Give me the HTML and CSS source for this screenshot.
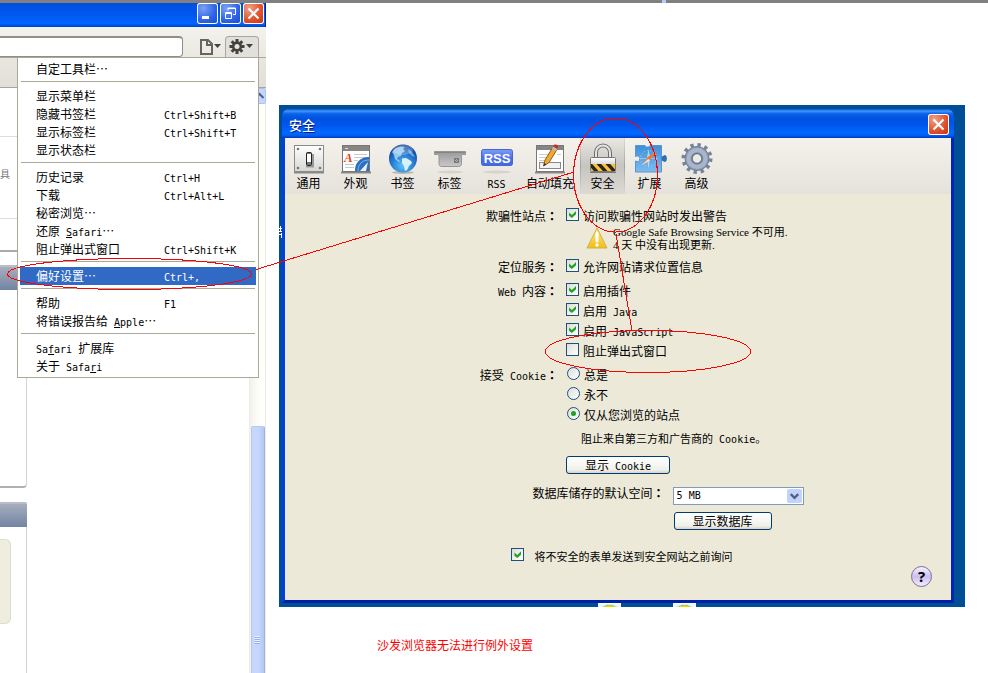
FILE: index.html
```html
<!DOCTYPE html>
<html lang="zh-CN">
<head>
<meta charset="utf-8">
<title>安全</title>
<link rel="stylesheet" href="styles.css">
</head>
<body>
<main class="stage">
  <section class="browser">
    <header class="browser-title">
      <button class="win-btn" aria-label="最小化"><svg width="21" height="21" viewBox="0 0 21 21"><rect x="5" y="13" width="7" height="3" fill="#fff"/></svg></button>
      <button class="win-btn" aria-label="还原"><svg width="21" height="21" viewBox="0 0 21 21" fill="none" stroke="#fff"><path d="M8 7.500V5h7.500v6.500H13M8 5.500h7.500"/><path d="M5.500 9.500h6v6h-6zM5 10.500h7"/></svg></button>
      <button class="win-btn win-close" aria-label="关闭"><svg width="21" height="21" viewBox="0 0 21 21"><path d="M5.500 5.500l10 10M15.500 5.500l-10 10" stroke="#fff" stroke-width="2.200"/></svg></button>
    </header>
    <div class="address-bar">
      <input class="address" type="text" aria-label="地址">
      <button class="tool-btn" aria-label="页面"><svg width="24" height="20" viewBox="0 0 24 20"><path d="M2 3h7l4 4v10H2zM8 3v5h5" fill="none" stroke="#66645e" stroke-width="2"/><path d="M15 7h7l-3.500 4z" fill="#44423c"/></svg></button>
      <button class="tool-btn tool-open" aria-label="设置"><svg width="28" height="20" viewBox="0 0 28 20"><g stroke="#45433a" stroke-width="3"><path d="M9 2v15M1.500 9.500h15M3.700 4.200l10.600 10.600M14.300 4.200L3.700 14.800"/></g><circle cx="9" cy="9.500" r="5" fill="#45433a"/><circle cx="9" cy="9.500" r="2.500" fill="#e7e5e0"/><path d="M18 7h7l-3.500 4z" fill="#44423c"/></svg></button>
    </div>
    <div class="bookmark-bar"></div>
    <div class="page">
      <div class="cards">
        <div class="card-line line-first"></div>
        <div class="card-text">具</div>
        <div class="card-line line-second"></div>
        <div class="card-end"></div>
        <div class="card-head"></div>
        <div class="card-body"></div>
        <div class="card-head head-next"></div>
        <div class="card-rest"><div class="paper"></div></div>
      </div>
      <div class="scrollbar">
        <div class="scroll-up"><svg width="15" height="15" viewBox="0 0 15 15"><path d="M3.500 9l4-4 4 4" fill="none" stroke="#4d6185" stroke-width="2"/></svg></div>
        <div class="thumb"><div class="grip"></div></div>
      </div>
    </div>
    <nav class="menu">
      <button class="item"><span>自定工具栏…</span></button>
      <hr>
      <button class="item"><span>显示菜单栏</span></button>
      <button class="item"><span>隐藏书签栏</span><kbd>Ctrl+Shift+B</kbd></button>
      <button class="item"><span>显示标签栏</span><kbd>Ctrl+Shift+T</kbd></button>
      <button class="item"><span>显示状态栏</span></button>
      <hr>
      <button class="item"><span>历史记录</span><kbd>Ctrl+H</kbd></button>
      <button class="item"><span>下载</span><kbd>Ctrl+Alt+L</kbd></button>
      <button class="item"><span>秘密浏览…</span></button>
      <button class="item"><span>还原<i class="en"> <u>S</u>afari</i>…</span></button>
      <button class="item"><span>阻止弹出式窗口</span><kbd>Ctrl+Shift+K</kbd></button>
      <hr>
      <button class="item active"><span>偏好设置…</span><kbd>Ctrl+,</kbd></button>
      <hr>
      <button class="item"><span>帮助</span><kbd>F1</kbd></button>
      <button class="item"><span>将错误报告给<i class="en"> <u>A</u>pple</i>…</span></button>
      <hr>
      <button class="item"><span><i class="en">Sa<u>f</u>ari </i>扩展库</span></button>
      <button class="item"><span>关于<i class="en"> Safa<u>r</u>i</i></span></button>
    </nav>
  </section>

  <section class="side">
    <div class="desktop">
      <svg class="glyph-bit" width="3" height="12" viewBox="0 0 3 12" fill="none" stroke="#fff"><path d="M0 2.500h3M1.500 0v5M0 5.500h3M0 8.500h2M2.500 7v5"/></svg>
      <div class="dialog">
        <header class="dialog-title">
          <h1>安全</h1>
          <button class="win-btn win-close" aria-label="关闭"><svg width="21" height="21" viewBox="0 0 21 21"><path d="M5.500 5.500l10 10M15.500 5.500l-10 10" stroke="#fff" stroke-width="2.200"/></svg></button>
        </header>
        <nav class="tabs">
          <button class="tab">
            <svg width="32" height="32" viewBox="0 0 32 32"><defs><linearGradient id="plate" x2="0" y2="1"><stop stop-color="#fff"/><stop offset="1" stop-color="#d6d6d4"/></linearGradient></defs><path d="M1 29.500h30" stroke="#8b8985" stroke-width="2"/><rect x="1.500" y="2.500" width="29" height="26" fill="url(#plate)" stroke="#8a8a8a"/><g fill="#777"><circle cx="5" cy="6" r="1.300"/><circle cx="27" cy="6" r="1.300"/><circle cx="5" cy="25" r="1.300"/><circle cx="27" cy="25" r="1.300"/></g><path d="M13 23.500h7V11" fill="none" stroke="#999" stroke-width="2"/><rect x="13.500" y="9.500" width="5" height="13" rx="1" fill="#777" stroke="#222"/><rect x="14" y="11" width="4" height="8" fill="#fff"/></svg>
            <span>通用</span>
          </button>
          <button class="tab">
            <svg width="32" height="32" viewBox="0 0 32 32"><defs><clipPath id="sheet"><rect x="3" y="8" width="26" height="20"/></clipPath></defs><path d="M1 29.500h30" stroke="#8b8985" stroke-width="2"/><rect x="2.500" y="2.500" width="27" height="26" fill="#fff" stroke="#777"/><rect x="3" y="3" width="26" height="5" fill="#8a8580"/><path d="M5 5.500h3" stroke="#ddd"/><g stroke="#c8c8c8"><path d="M14 11.500h13M14 14.500h13M14 17.500h4M5 21.500h9M5 24.500h9"/></g><text x="4" y="19" font-family="Liberation Serif" font-weight="bold" font-style="italic" font-size="13" fill="#e0481a">A</text><g clip-path="url(#sheet)"><circle cx="28" cy="27" r="13" fill="#2c6fc2"/><circle cx="28" cy="27" r="10" fill="none" stroke="#7db2e8"/><path d="M20 28l8-9-2 9z" fill="#e4f1ff"/></g></svg>
            <span>外观</span>
          </button>
          <button class="tab">
            <svg width="32" height="32" viewBox="0 0 32 32"><defs><radialGradient id="globe" cx=".5" cy=".75" r=".7"><stop stop-color="#5cc4f8"/><stop offset=".6" stop-color="#2578d0"/><stop offset="1" stop-color="#12439a"/></radialGradient></defs><ellipse cx="16" cy="29.500" rx="11" ry="1.500" fill="#b8b5ad"/><circle cx="16" cy="15.500" r="14" fill="url(#globe)"/><path d="M5 9c2-3 5-5 9-5.500l4 .5-2 2 2 2-3 2-1 3-3 1-1 2 3 2-1 1-4-3-1-4z" fill="#a9d8f5" opacity=".85"/><path d="M15 15.500l4-.5 5 3 1 2-3 3-2 4-2 1-1-5-2-3z" fill="#d9f1ff"/><path d="M21 6l4 3 3 5-3-1-3-3z" fill="#8cc6ef" opacity=".7"/><ellipse cx="16" cy="7" rx="10" ry="5" fill="#fff" opacity=".25"/></svg>
            <span>书签</span>
          </button>
          <button class="tab">
            <svg width="34" height="32" viewBox="0 0 34 32"><defs><linearGradient id="tabg" x2="0" y2="1"><stop stop-color="#999"/><stop offset="1" stop-color="#c8c8c8"/></linearGradient></defs><path d="M1.500 8.500h31v3h-2.500c-1 0-1.500.5-1.500 2v7c0 2-1 3-3 3H9c-2 0-3-1-3-3v-7c0-1.500-.5-2-1.500-2h-3z" fill="url(#tabg)" stroke="#959595"/><path d="M2 9.500h30" stroke="#858585"/><path d="M21.500 15.500h4v4h-4zM21.500 15.500l4 4M25.500 15.500l-4 4" stroke="#777" fill="none"/><ellipse cx="17" cy="29" rx="13" ry="1.500" fill="#d6d3cd"/></svg>
            <span>标签</span>
          </button>
          <button class="tab">
            <svg width="34" height="32" viewBox="0 0 34 32"><defs><linearGradient id="rssg" x2="0" y2="1"><stop stop-color="#7d9cf8"/><stop offset=".5" stop-color="#4f73ea"/><stop offset="1" stop-color="#4468e2"/></linearGradient></defs><rect x="1.500" y="6.500" width="31" height="16" rx="2" fill="url(#rssg)" stroke="#4565cf"/><text x="17" y="19.500" text-anchor="middle" font-family="Liberation Sans" font-weight="bold" font-size="13" fill="#fff">RSS</text><ellipse cx="17" cy="29" rx="14" ry="1.500" fill="#d6d3cd"/></svg>
            <span><i class="en">RSS</i></span>
          </button>
          <button class="tab tab-wide">
            <svg width="32" height="32" viewBox="0 0 32 32"><path d="M1 29.500h30" stroke="#8b8985" stroke-width="2"/><rect x="2.500" y="2.500" width="27" height="26" fill="#fff" stroke="#777"/><rect x="3" y="3" width="26" height="4" fill="#858585"/><path d="M5 11.500h13M5 14.500h9M5 17.500h9M23 11.500h4" stroke="#ccc"/><rect x="5.500" y="19.500" width="21" height="6" fill="#f2f2f2" stroke="#888"/><path d="M9.500 23l1.500-6L19 4l4 2.500-8 13z" fill="#efaa34" stroke="#985b18"/><path d="M18 5.500l1.500-2.500 4 2.500-1.500 2.500z" fill="#b9c1c9"/><path d="M19 3.500l1-1.500c2-1.500 5 1 4 2.500l-1 1.500z" fill="#c8302a"/><path d="M9.500 23l.7-3 2.300 1.500z" fill="#333"/></svg>
            <span>自动填充</span>
          </button>
          <button class="tab selected">
            <svg width="32" height="32" viewBox="0 0 32 32"><defs><linearGradient id="lockg" x2="0" y2="1"><stop stop-color="#fff"/><stop offset="1" stop-color="#b0b0b0"/></linearGradient><clipPath id="stripe"><rect x="4" y="21" width="24" height="7"/></clipPath></defs><path d="M9 15V9.500a7 7 0 0 1 14 0V15" fill="none" stroke="#6e6e6e" stroke-width="4"/><path d="M9 15V9.500a7 7 0 0 1 14 0V15" fill="none" stroke="#e4e4e4" stroke-width="2"/><rect x="3.500" y="14.500" width="25" height="14" rx="1" fill="url(#lockg)" stroke="#777"/><rect x="4" y="21" width="24" height="7" fill="#f8c23c"/><path clip-path="url(#stripe)" d="M2 20l8 9M11 20l8 9M20 20l8 9" stroke="#2b2618" stroke-width="3.400"/><path d="M3 29.500h26" stroke="#777"/></svg>
            <span>安全</span>
          </button>
          <button class="tab">
            <svg width="34" height="32" viewBox="0 0 34 32"><defs><linearGradient id="puz" x2="0" y2="1"><stop stop-color="#3c8fda"/><stop offset="1" stop-color="#7dbcee"/></linearGradient></defs><path d="M2.500 2.500h9.500c.5 2 4.500 2 5 0h11.500v11c1.500.5 2-1 3.500-1 2 0 2 6 0 6-1.500 0-2-1.500-3.500-1v11.500H2.500V18c1.500.5 2 .5 3 .5 1.500-.5 1.500-5 0-5.500-1 0-1.500 0-3 .5z" fill="url(#puz)" stroke="#5b94cb"/><path d="M28.500 13.500c1.500.5 2-1 3.500-1 2 0 2 6 0 6-1.500 0-2-1.500-3.500-1z" fill="#2f6fae"/><circle cx="15.500" cy="15.500" r="8" fill="none" stroke="#a9d3f5" stroke-dasharray="1 2"/><path d="M15.500 6l1.500 8.500-1.500 11-1.500-11z" fill="#b5dbf7"/><path d="M6 15.500h19" stroke="#8fc4ef"/><path d="M8 22.500l6.500-8 2.500 3z" fill="#d3915f"/><path d="M25 7l-8.500 10.500-2.500-3z" fill="#ee7a32"/><path d="M8 22.500l9-5-1.500-1.500z" fill="#f6e9df"/></svg>
            <span>扩展</span>
          </button>
          <button class="tab">
            <svg width="32" height="32" viewBox="0 0 32 32"><circle cx="16" cy="15.500" r="13.500" fill="none" stroke="#74849d" stroke-width="4" stroke-dasharray="3.300 3.770"/><circle cx="16" cy="15.500" r="12" fill="#8e9db4" stroke="#6d7c95"/><circle cx="16" cy="15.500" r="8.500" fill="none" stroke="#a9b6c9" stroke-width="4"/><circle cx="16" cy="15.500" r="5" fill="#eceae5" stroke="#66758d" stroke-width="1.500"/></svg>
            <span>高级</span>
          </button>
        </nav>

        <form class="form">
          <div class="row row-site">
            <div class="caption">欺骗性站点<b lang="zh-TW">：</b></div>
            <div class="fields">
              <label class="option"><input type="checkbox" checked><span>访问欺骗性网站时发出警告</span></label>
              <div class="notice">
                <svg width="24" height="24" viewBox="0 0 24 24"><defs><linearGradient id="warn" x2="0" y2="1"><stop stop-color="#ffe979"/><stop offset="1" stop-color="#f2bd16"/></linearGradient></defs><path d="M12 2L22 22H2z" fill="url(#warn)" stroke="#d3b04b" stroke-linejoin="round"/><path d="M12 7v8" stroke="#fff" stroke-width="3" stroke-linecap="round"/><circle cx="12" cy="19" r="1.700" fill="#fff"/></svg>
                <p>Google Safe Browsing Service 不可用.<br>4 天 中没有出现更新.</p>
              </div>
            </div>
          </div>
          <div class="row">
            <div class="caption">定位服务<b lang="zh-TW">：</b></div>
            <div class="fields">
              <label class="option"><input type="checkbox" checked><span>允许网站请求位置信息</span></label>
            </div>
          </div>
          <div class="row">
            <div class="caption"><i class="en">Web </i>内容<b lang="zh-TW">：</b></div>
            <div class="fields">
              <label class="option"><input type="checkbox" checked><span>启用插件</span></label>
              <label class="option"><input type="checkbox" checked><span>启用<i class="en"> Java</i></span></label>
              <label class="option"><input type="checkbox" checked><span>启用<i class="en"> JavaScript</i></span></label>
              <label class="option"><input type="checkbox"><span>阻止弹出式窗口</span></label>
            </div>
          </div>
          <div class="row">
            <div class="caption">接受<i class="en"> Cookie</i><b lang="zh-TW">：</b></div>
            <div class="fields">
              <label class="option"><input type="radio" name="cookie"><span>总是</span></label>
              <label class="option"><input type="radio" name="cookie"><span>永不</span></label>
              <label class="option"><input type="radio" name="cookie" checked><span>仅从您浏览的站点</span></label>
              <p class="hint">阻止来自第三方和广告商的<i class="en"> Cookie</i>。</p>
              <button type="button" class="push push-cookie">显示<i class="en"> Cookie</i></button>
            </div>
          </div>
          <div class="row row-db">
            <label class="caption" for="quota">数据库储存的默认空间<b lang="zh-TW">：</b></label>
            <div class="fields">
              <div class="select"><select id="quota"><option>5 MB</option></select><svg width="15" height="15" viewBox="0 0 15 15"><path d="M3.500 5.500l4 4 4-4" fill="none" stroke="#4d6185" stroke-width="2.400"/></svg></div>
              <button type="button" class="push push-db">显示数据库</button>
            </div>
          </div>
          <label class="option ask"><input type="checkbox" checked><span>将不安全的表单发送到安全网站之前询问</span></label>
          <button type="button" class="help" aria-label="帮助">?</button>
        </form>
      </div>
      <div class="desk-icons"><i></i><i></i></div>
    </div>
    <p class="remark">沙发浏览器无法进行例外设置</p>
  </section>

  <div class="top-mark"></div>
  <svg class="marks" width="988" height="673" viewBox="0 0 988 673" fill="none" stroke="#f00" shape-rendering="crispEdges">
    <ellipse cx="129.500" cy="274" rx="122" ry="15.500"/>
    <path d="M256 269.500L574 172"/>
    <ellipse cx="615.500" cy="175" rx="42" ry="57"/>
    <path d="M616 234L632 331"/>
    <ellipse cx="648" cy="351.500" rx="102.500" ry="21"/>
  </svg>
</main>
</body>
</html>
```
FILE: styles.css
```css
* { box-sizing: border-box; }

body {
  margin: 0;
  background: #fff;
  color: #000;
  font: 12px/18px "Noto Sans CJK SC", sans-serif;
}

button, input, select { font: inherit; color: inherit; }
button { margin: 0; padding: 0; border: 0; background: none; }
svg { display: block; }
p { margin: 0; }

.en, kbd {
  font-family: "DejaVu Sans Mono", monospace;
  font-size: 10px;
  font-style: normal;
  line-height: 1;
  white-space: pre;
}

.stage {
  position: relative;
  display: flex;
  gap: 13px;
  min-height: 100vh;
  border-top: 3px solid #808080;
}

/* Browser window */
.browser {
  position: relative;
  display: flex;
  flex-direction: column;
  flex: none;
  width: 266px;
}

.browser-title {
  display: flex;
  justify-content: flex-end;
  gap: 2px;
  height: 24px;
  padding-right: 1px;
  background: linear-gradient(#0050e0, #0058ee 50%, #0066ff 85%, #0040d0);
  border-right: 1px solid #001ea0;
}

.win-btn {
  width: 21px;
  height: 21px;
  overflow: hidden;
  border-radius: 3px;
  box-shadow: inset 0 0 0 1px #fff;
  background: radial-gradient(circle at 30% 25%, #7ba2f4, #2f64e8 55%, #1747cc);
}

.win-close { background: radial-gradient(circle at 30% 25%, #f0a088, #e0512c 55%, #c03008); }

.address-bar {
  display: flex;
  align-items: flex-start;
  height: 30px;
  padding: 9px 7px 0 0;
  background: linear-gradient(#f4f2ec, #ebe8e2);
}

.address {
  width: 183px;
  height: 21px;
  margin-right: 16px;
  border: 1px solid #918e86;
  border-left: 0;
  border-top-width: 2px;
  border-radius: 0 4px 4px 0;
  background: #fff;
}

.tool-btn { height: 21px; }

.tool-open {
  width: 34px;
  margin-left: auto;
  padding-left: 2px;
  border: 1px solid #aaa79f;
  border-bottom: 0;
  border-radius: 4px 4px 0 0;
  background: #e2e0dc;
}

.bookmark-bar {
  height: 31px;
  border-top: 1px solid #aaa798;
  border-bottom: 1px solid #a9a59b;
  background: linear-gradient(#e9e6e0, #e2dfd8);
}

.page { display: flex; flex: 1; justify-content: space-between; }

.cards { display: flex; flex-direction: column; width: 27px; }
.card-line { width: 17px; border-top: 1px solid #ddd; }
.line-first { margin-top: 48px; }
.card-text { height: 18px; margin: 28px 0 35px; font-size: 10px; color: #777; }
.card-end { height: 33px; border-bottom: 2px solid #aaa; }
.card-head {
  height: 25px;
  margin-top: 13px;
  border-top: 2px solid #b7bdca;
  border-radius: 0 2px 0 0;
  background: linear-gradient(#a7aebd, #7283a3);
}
.card-body {
  height: 198px;
  border-right: 1px solid #d4d4d4;
  border-bottom: 2px solid #b0b0b0;
  border-radius: 0 0 4px 0;
}
.head-next { margin-top: 14px; }
.card-rest { flex: 1; padding-top: 12px; border-right: 1px solid #d4d4d4; }
.paper {
  width: 11px;
  height: 85px;
  border: 1px solid #dcdcd2;
  border-left: 0;
  border-radius: 0 6px 6px 0;
  background: #efeddd;
}

.scrollbar {
  display: flex;
  flex-direction: column;
  width: 17px;
  padding: 0 1px;
  border: 1px solid #eeede5;
  border-width: 0 1px;
  background: linear-gradient(90deg, #f2f1ea, #fefefb 60%);
}
.scroll-up {
  width: 15px;
  height: 16px;
  border: 1px solid #a9c3f6;
  border-radius: 2px;
  background: #c6d5fd;
}
.thumb {
  flex: 1;
  margin-top: 322px;
  padding: 209px 3px 0;
  border: 1px solid #b4c8f6;
  border-bottom: 0;
  border-radius: 2px 2px 0 0;
  box-shadow: 1px 0 #9db6d8;
  background: linear-gradient(90deg, #c8d6fb, #c6d5fd 60%, #b4cbf8);
}
.grip { height: 8px; background: repeating-linear-gradient(#eef4fe 0 1px, #8cb0f8 1px 2px); }

.menu {
  position: absolute;
  top: 54px;
  left: 17px;
  width: 242px;
  padding: 2px;
  border: 1px solid #aca899;
  background: #fff;
}
.menu hr { height: 1px; margin: 3px 1px 5px; border: 0; background: #aca899; }
.item {
  display: grid;
  grid-template-columns: 128px 1fr;
  align-items: baseline;
  width: 100%;
  height: 18px;
  padding-left: 16px;
  text-align: left;
  line-height: 18px;
  white-space: nowrap;
}
.item.active { background: #316ac5; color: #fff; }

/* Preferences window */
.side { flex: 1; min-width: 0; padding: 102px 23px 0 0; }

.desktop { position: relative; padding: 4px 11px 0 3px; background: #004e98; }
.glyph-bit { position: absolute; left: 0; top: 121px; }

.dialog {
  border: 3px solid #0040e0;
  border-top: 0;
  border-right-color: #0026b8;
  border-bottom-color: #001fa8;
  border-radius: 7px 7px 0 0;
  background: #ece9d8;
}

.dialog-title {
  display: flex;
  align-items: center;
  justify-content: space-between;
  height: 29px;
  margin: 0 -3px;
  padding: 2px 5px 0 7px;
  border-radius: 7px 7px 0 0;
  background: linear-gradient(#0a4fc8, #3c98ff 7%, #0a60e8 17%, #0050e0 35%, #0056ec 55%, #0068ff 80%, #0062f4 90%, #0038c8);
}
.dialog-title h1 {
  margin: 0;
  color: #fff;
  font-size: 13px;
  font-weight: 500;
  line-height: 20px;
  text-shadow: 1px 1px #0a1883;
}

.tabs { display: flex; height: 56px; background: linear-gradient(#f4f2ea, #e5e2dc); }
.tab {
  display: flex;
  flex-direction: column;
  align-items: center;
  flex: none;
  width: 47px;
  padding-top: 5px;
  white-space: nowrap;
  line-height: 16px;
}
.tab-wide { width: 60px; }
.selected {
  width: 45px;
  margin-right: 1px;
  background:
    linear-gradient(#dcdad4, #a5a39e 50%, #dddad4) left / 1px 100% no-repeat,
    linear-gradient(#dcdad4, #a5a39e 50%, #dddad4) right / 1px 100% no-repeat,
    linear-gradient(#e9e7e0, #c7c5c0 50%, #dddad4);
}

.form { position: relative; padding: 12px 0 13px; }
.row { display: flex; gap: 8px; margin-bottom: 4px; }
.row-site { margin-bottom: 7px; }
.caption { width: 41%; text-align: right; line-height: 20px; white-space: nowrap; }
.caption b { font-family: "Noto Sans CJK TC", sans-serif; }
.fields { flex: 1; }

.option { display: flex; align-items: flex-start; gap: 4px; height: 20px; line-height: 20px; white-space: nowrap; }
.option input {
  position: relative;
  flex: none;
  appearance: none;
  width: 13px;
  height: 13px;
  margin: 2px 0 0;
  border: 1px solid #1c5180;
  background: linear-gradient(135deg, #dcdcd7, #fff);
}
.option input[type="checkbox"]:checked::after {
  content: "";
  position: absolute;
  inset: 2px;
  background: #21a121;
  clip-path: polygon(0 22%, 40% 56%, 100% 0, 100% 46%, 40% 100%, 0 68%);
}
.option input[type="radio"] { margin-left: 1px; border-radius: 50%; }
.option input[type="radio"]:checked::after {
  content: "";
  position: absolute;
  inset: 3px;
  border-radius: 50%;
  background: #21a121;
}

.notice { display: flex; gap: 4px; height: 24px; padding-left: 19px; }
.notice p {
  font: 11px/13px "Liberation Serif", "Noto Sans CJK SC", serif;
  white-space: nowrap;
}

.hint { margin: 4px 0 9px 15px; font-size: 11px; white-space: nowrap; }

.push {
  display: block;
  height: 18px;
  border: 1px solid #003c74;
  border-radius: 3px;
  background: linear-gradient(#fff, #f0f0ea 80%, #d8d2c8);
  line-height: 16px;
}
.push-cookie { width: 104px; }
.push-db { width: 98px; margin: 7px 0 0 1px; }

.row-db { margin: 9px 0 16px; }
.row-db .caption { width: 57%; }
.row-db .fields { padding-top: 4px; }
.select { position: relative; width: 131px; height: 18px; }
.select select {
  appearance: none;
  display: block;
  width: 100%;
  height: 18px;
  padding: 0 3px;
  border: 1px solid #7f9db9;
  border-radius: 0;
  background: #fff;
  font: 10px/16px "DejaVu Sans Mono", monospace;
}
.select svg {
  position: absolute;
  top: 2px;
  right: 2px;
  height: 14px;
  border-radius: 2px;
  background: #c1d3fb;
  pointer-events: none;
}

.ask { gap: 10px; margin-left: 34%; font-size: 11px; }
.help {
  display: block;
  width: 21px;
  height: 21px;
  margin: 0 19px 0 auto;
  border: 1px solid #77738a;
  border-radius: 50%;
  background: linear-gradient(#f6f2ff, #cdbdf4 50%, #f2ecff);
  font: bold 15px/19px "Noto Sans", sans-serif;
}

.desk-icons { display: flex; gap: 52px; height: 4px; padding-left: 316px; }
.desk-icons i { width: 23px; background: radial-gradient(ellipse at 50% 100%, #f0d800 0 4px, #70d020 5px, #cfe6fa 6px, #f4f9fe 10px); }

.remark { padding: 29px 0 0 98px; color: #f00; }

/* Red pen marks over both windows */
.marks { position: absolute; top: -3px; left: 0; pointer-events: none; }
.top-mark { position: absolute; top: -3px; left: 662px; width: 4px; height: 3px; background: #a8d0f8; }
```
